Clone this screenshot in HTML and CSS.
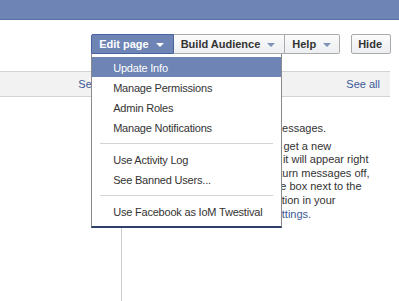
FILE: index.html
```html
<!DOCTYPE html>
<html lang="en">
<head>
    <meta charset="UTF-8">
    <title>IoM Twestival</title>
    <link rel="stylesheet" href="styles.css">
</head>
<body>
    <div class="bluebar"></div>

    <div class="toolbar">
        <div class="menu-group">
            <div class="menu-wrap">
                <a class="tbtn active" href="#">Edit page<span class="caret"></span></a>
                <ul class="dropdown">
                    <li class="selected"><a href="#">Update Info</a></li>
                    <li><a href="#">Manage Permissions</a></li>
                    <li><a href="#">Admin Roles</a></li>
                    <li><a href="#">Manage Notifications</a></li>
                    <li class="sep"></li>
                    <li><a href="#">Use Activity Log</a></li>
                    <li><a href="#">See Banned Users...</a></li>
                    <li class="sep"></li>
                    <li><a href="#">Use Facebook as IoM Twestival</a></li>
                </ul>
            </div>
            <a class="tbtn" href="#">Build Audience<span class="caret"></span></a>
            <a class="tbtn" href="#">Help<span class="caret"></span></a>
        </div>
        <a class="tbtn hide" href="#">Hide</a>
    </div>

    <div class="strip">
        <div class="strip-left"><a href="#">See all</a></div>
        <div class="strip-right"><a href="#">See all</a></div>
    </div>

    <div class="columns">
        <div class="col-left"></div>
        <div class="col-right">
            <p class="empty">You have no new messages.</p>
            <p class="hint">
                <span>In the event that you get a new</span>
                <span>message from a new visitor, it will appear right</span>
                <span>here in your Page inbox. To turn messages off,</span>
                <span>You can simply uncheck the box next to the</span>
                <span>and the <a href="#">Messages</a> option in your</span>
                <span><a href="#">Your Account Settings.</a></span>
            </p>
        </div>
    </div>
</body>
</html>
```

FILE: styles.css
```css
body {
    margin: 0;
    font-family: "Liberation Sans", Arial, sans-serif;
    font-size: 11px;
    color: #333;
    background: #fff;
}

a {
    color: #3b5998;
    text-decoration: none;
}

.bluebar {
    height: 19px;
    background: #6d84b4;
    border-bottom: 1px solid #5b70a6;
}

/* page toolbar */
.toolbar {
    display: flex;
    justify-content: flex-end;
    gap: 11px;
    padding: 14px 8px 0 0;
}

.menu-group {
    display: flex;
}

.menu-wrap {
    position: relative;
    display: flex;
}

.tbtn {
    display: flex;
    align-items: center;
    height: 18px;
    padding: 0 9px 0 7px;
    border: 1px solid #aaa;
    border-left: 0;
    background: linear-gradient(#fbfbfb, #eceef1);
    color: #333;
    font-weight: bold;
}

.menu-group > .tbtn:last-child {
    padding-right: 8px;
    border-radius: 0 2px 2px 0;
}

.tbtn .caret {
    width: 0;
    height: 0;
    margin-left: 7px;
    margin-top: 1px;
    border-left: 4px solid transparent;
    border-right: 4px solid transparent;
    border-top: 4px solid #7f91b8;
}

.tbtn.active {
    background: #6d84b4;
    border: 1px solid #4a62a0;
    color: #fff;
    border-radius: 2px 0 0 0;
}

.tbtn.active .caret {
    border-top-color: #fff;
}

.tbtn.hide {
    border-left: 1px solid #aaa;
    border-radius: 2px;
    padding: 0 8px 0 6px;
}

/* edit page menu */
.dropdown {
    position: absolute;
    top: 100%;
    left: 0;
    z-index: 10;
    width: 189px;
    margin: 0;
    padding: 3px 0 5px;
    list-style: none;
    background: #fff;
    border: 1px solid #8a8a8a;
    border-top: 0;
    border-bottom: 2px solid #2f3f68;
    letter-spacing: -0.2px;
}

.dropdown li a {
    display: block;
    line-height: 18px;
    padding: 2px 0 0 21px;
    color: #333;
    white-space: nowrap;
}

.dropdown li.selected a {
    background: #6d84b4;
    color: #fff;
}

.dropdown li.sep {
    height: 1px;
    margin: 6px 8px 5px 8px;
    background: #d4d4d4;
}

/* section header strip */
.strip {
    display: flex;
    width: 390px;
    height: 24px;
    margin-top: 17px;
    background: #f2f2f2;
    border-top: 1px solid #d3d3d3;
    border-bottom: 1px solid #d3d3d3;
}

.strip-left {
    width: 112px;
    padding-right: 9px;
    text-align: right;
    line-height: 24px;
}

.strip-right {
    flex: 1;
    padding-right: 10px;
    text-align: right;
    line-height: 24px;
}

.columns {
    display: flex;
    height: 204px;
}

.col-left {
    width: 121px;
    border-right: 1px solid #ccc;
}

.col-right {
    width: 268px;
    padding-top: 25px;
    text-align: center;
}

.col-right p {
    margin: 0;
    line-height: 13.6px;
}

.col-right .empty {
    margin-bottom: 4px;
}

.col-right .hint span {
    display: block;
    white-space: nowrap;
}
```
